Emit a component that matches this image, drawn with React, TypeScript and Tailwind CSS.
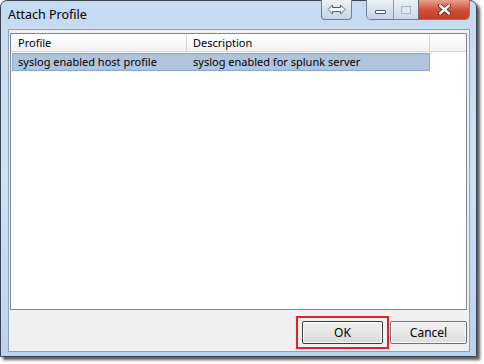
const font = { fontFamily: '"Noto Sans", "Open Sans", sans-serif' };

export default function App() {
  return (
    <div className="w-[484px] h-[364px] bg-white overflow-hidden" style={font}>
      <div className="relative w-[477px] h-[357px] rounded-t-[7px] border border-[#3b4552] bg-gradient-to-b from-[#c5dbf1] via-[#cfe1f4] to-[#b9d3ee] shadow-[3px_3px_3px_rgba(0,0,0,0.65)] flex flex-col">
        <div className="h-[28px] flex items-start shrink-0">
          <div className="pl-[7px] pt-[6px] text-[12.5px] text-black leading-[16px]">Attach Profile</div>
          <div className="ml-auto mt-[-1px] w-[31px] h-[20px] border border-t-0 border-[#6f8196] rounded-b-[4px] bg-gradient-to-b from-[#eef3f9] to-[#c3d3e6] flex items-center justify-center">
            <svg width="19" height="11" viewBox="0 0 19 11">
              <path d="M1 5.5 L5.5 1 L5.5 3.5 L13.5 3.5 L13.5 1 L18 5.5 L13.5 10 L13.5 7.5 L5.5 7.5 L5.5 10 Z" fill="#ffffff" stroke="#4d5d70" strokeWidth="1" strokeLinejoin="round" />
            </svg>
          </div>
          <div className="ml-[14px] mr-[6px] mt-[-1px] h-[20px] flex border border-t-0 border-[#6f8196] rounded-b-[5px] overflow-hidden">
            <div className="w-[27px] h-full bg-gradient-to-b from-[#e9f0f8] to-[#c3d3e6] border-r border-[#8c9db3] flex items-center justify-center">
              <div className="w-[11px] h-[4px] mt-[4px] bg-white border border-[#4a5868] rounded-[1px]" />
            </div>
            <div className="w-[25px] h-full bg-gradient-to-b from-[#e9f0f8] to-[#c9d8ea] border-r border-[#8c6060] flex items-center justify-center">
              <div className="w-[10px] h-[8px] border border-[#a7b6c8] bg-[#dfe8f2]" />
            </div>
            <div className="w-[50px] h-full bg-gradient-to-b from-[#e8a08f] via-[#d0533c] to-[#c43a25] flex items-center justify-center">
              <svg width="13" height="11" viewBox="0 0 13 11">
                <path d="M2 1.5 L11 9.5 M11 1.5 L2 9.5" stroke="#5a1a10" strokeWidth="4" strokeLinecap="round" />
                <path d="M2 1.5 L11 9.5 M11 1.5 L2 9.5" stroke="#ffffff" strokeWidth="2.4" strokeLinecap="round" />
              </svg>
            </div>
          </div>
        </div>
        <div className="ml-[7px] mr-[6px] mb-[4px] flex-1 border border-[#8fa2b8] bg-[#f0f0f0] flex flex-col">
          <div className="ml-[1px] mr-[2px] mt-[3px] h-[277px] border border-[#828790] bg-white text-[11px] text-black leading-[16px]">
            <div className="flex h-[18px] border-b border-[#d5d5d5] bg-gradient-to-b from-[#ffffff] to-[#f1f2f4]">
              <div className="w-[176px] pl-[7px] pt-[1px] border-r border-[#d5d5d5]">Profile</div>
              <div className="w-[243px] pl-[6px] pt-[1px] border-r border-[#d5d5d5]">Description</div>
              <div className="flex-1" />
            </div>
            <div className="mt-[1px] ml-[1px] w-[418px] h-[18px] flex bg-[#b0c4de] border border-[#86a5cc]">
              <div className="w-[174px] pl-[5px]">syslog enabled host profile</div>
              <div className="pl-[6px]">syslog enabled for splunk server</div>
            </div>
          </div>
          <div className="flex mt-[6px] ml-[287px] text-[12px] text-black">
            <div className="px-[4px] py-[3px] border-2 border-[#e4202c]">
              <div className="w-[81px] h-[23px] border border-[#3c3c3c] rounded-[2px] bg-gradient-to-b from-[#f2f2f2] to-[#d9d9d9] shadow-[inset_0_0_0_1px_#ffffff] flex items-center justify-center">
                OK
              </div>
            </div>
            <div className="ml-[1px] mt-[5px] w-[77px] h-[23px] border border-[#707070] rounded-[2px] bg-gradient-to-b from-[#f2f2f2] to-[#dddddd] shadow-[inset_0_0_0_1px_#fbfbfb] flex items-center justify-center">
              Cancel
            </div>
          </div>
        </div>
      </div>
    </div>
  );
}
